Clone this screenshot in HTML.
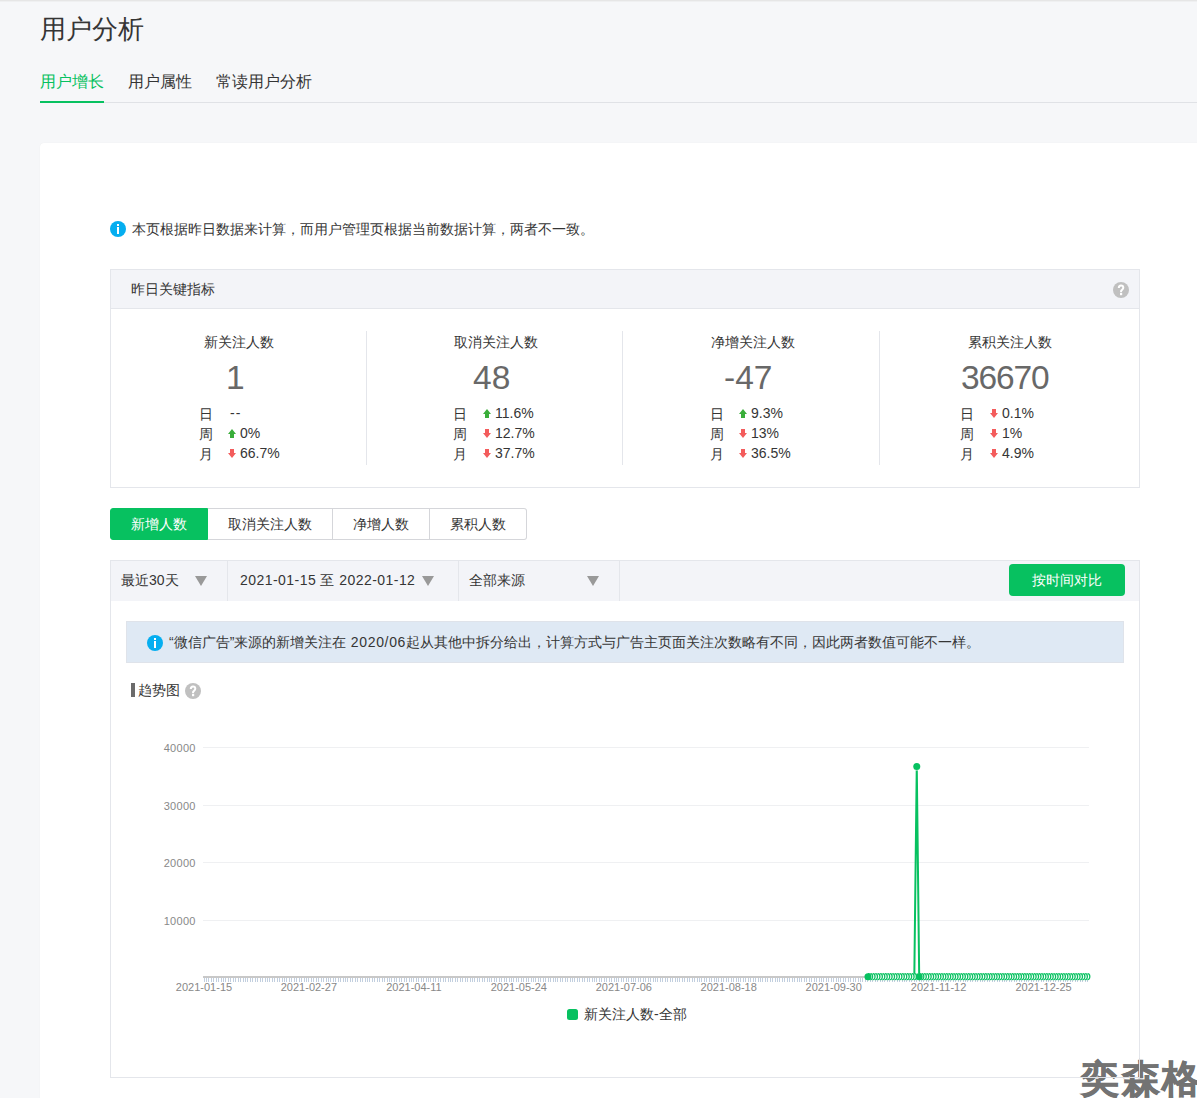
<!DOCTYPE html>
<html><head><meta charset="utf-8">
<style>
*{box-sizing:border-box;margin:0;padding:0}
html,body{width:1197px;height:1098px;overflow:hidden}
body{background:#f6f7f9;font-family:"Liberation Sans",sans-serif;color:#353535;position:relative;font-size:14px}
.a{position:absolute;white-space:nowrap}
.topline{left:0;top:0;width:1197px;height:2px;background:linear-gradient(#e6e6e6 0,#e6e6e6 1px,#eff0f1 1px,#eff0f1 2px)}
.title{left:40px;top:12px;font-size:26px;line-height:34px;color:#353535}
.tab{top:72px;font-size:16px;line-height:20px;color:#353535}
.tabline{left:40px;top:102px;width:1157px;height:1px;background:#e0e2e6}
.tabul{left:40px;top:101px;width:64px;height:2px;background:#07c160}
.card{left:40px;top:143px;width:1170px;height:1000px;background:#fff;border-radius:4px;box-shadow:0 0 1px rgba(0,0,0,.08)}
.icon-i{width:16px;height:16px;border-radius:50%;background:#05aef0}
.icon-i:before{content:"";position:absolute;left:7px;top:3px;width:2px;height:2px;background:#fff}
.icon-i:after{content:"";position:absolute;left:7px;top:6px;width:2px;height:7px;background:#fff}
.icon-q{width:16px;height:16px;border-radius:50%;background:#c0c0c0;color:#fff;font-size:13px;line-height:16px;text-align:center;font-weight:bold}
.kbox{left:110px;top:269px;width:1030px;height:219px;border:1px solid #e4e6eb}
.khead{left:111px;top:270px;width:1028px;height:39px;background:#f3f4f8;border-bottom:1px solid #e4e6eb}
.vdiv{top:331px;width:1px;height:134px;background:#e4e6eb}
.ktitle{top:332px;font-size:14px;line-height:20px;color:#353535}
.knum{top:360px;font-size:33.5px;line-height:36px;color:#686868}
.krow{font-size:14px;line-height:20px;color:#353535}
.arr{width:8px;height:9px}
.seg{top:508px;height:32px;border:1px solid #d5d6da;background:#fff;font-size:14px;line-height:30px;text-align:center;color:#353535}
.fbar{left:110px;top:560px;width:1030px;height:518px;border:1px solid #e4e6eb;background:#fff}
.fhead{left:111px;top:561px;width:1028px;height:40px;background:#f3f4f8}
.fdiv{top:561px;width:1px;height:40px;background:#e4e6eb}
.ftext{top:570px;font-size:14px;line-height:20px;color:#353535}
.tri{width:0;height:0;border-left:6px solid transparent;border-right:6px solid transparent;border-top:10px solid #999}
.btn{left:1009px;top:564px;width:116px;height:32px;border-radius:4px;background:#07c160;color:#fff;font-size:14px;line-height:32px;text-align:center}
.notice{left:126px;top:621px;width:998px;height:42px;background:#dfe9f4;border:1px solid #dfe3ea}
</style></head><body>
<div class="a topline"></div>
<div class="a title">用户分析</div>
<div class="a tab" style="left:40px;color:#07c160">用户增长</div>
<div class="a tab" style="left:128px">用户属性</div>
<div class="a tab" style="left:216px">常读用户分析</div>
<div class="a tabline"></div>
<div class="a tabul"></div>
<div class="a card"></div>

<div class="a icon-i" style="left:110px;top:221px"></div>
<div class="a" style="left:132px;top:219px;font-size:14px;line-height:20px">本页根据昨日数据来计算，而用户管理页根据当前数据计算，两者不一致。</div>

<div class="a kbox"></div>
<div class="a khead"></div>
<div class="a" style="left:131px;top:279px;font-size:14px;line-height:20px">昨日关键指标</div>
<svg class="a" style="left:1113px;top:282px" width="16" height="16" viewBox="0 0 16 16"><circle cx="8" cy="8" r="8" fill="#c0c0c0"/><path d="M5.8 6.1C5.8 4.5 6.8 3.4 8 3.4C9.3 3.4 10.3 4.4 10.3 5.8C10.3 7.2 8.8 7.7 8.1 8.9V10.2" fill="none" stroke="#fff" stroke-width="2"/><rect x="7" y="11" width="2.2" height="2.2" fill="#fff"/></svg>
<div class="a vdiv" style="left:366px"></div>
<div class="a vdiv" style="left:622px"></div>
<div class="a vdiv" style="left:879px"></div>


<div class="a ktitle" style="left:204px">新关注人数</div>
<div class="a ktitle" style="left:454px">取消关注人数</div>
<div class="a ktitle" style="left:711px">净增关注人数</div>
<div class="a ktitle" style="left:968px">累积关注人数</div>
<div class="a knum" style="left:226px">1</div>
<div class="a knum" style="left:473px">48</div>
<div class="a knum" style="left:724px">-47</div>
<div class="a knum" style="left:961px;letter-spacing:-1.1px">36670</div>

<div class="a krow" style="left:199px;top:404px">日</div>
<div class="a krow" style="left:199px;top:424px">周</div>
<div class="a krow" style="left:199px;top:444px">月</div>
<div class="a krow" style="left:230px;top:403px;letter-spacing:1px">--</div>
<svg class="a arr" style="left:228px;top:429px" viewBox="0 0 8 9"><path d="M4 0L8 5H6V9H2V5H0Z" fill="#3aae3a"/></svg>
<div class="a krow" style="left:240px;top:423px">0%</div>
<svg class="a arr" style="left:228px;top:449px" viewBox="0 0 8 9"><path d="M4 9L8 4H6V0H2V4H0Z" fill="#f35c5c"/></svg>
<div class="a krow" style="left:240px;top:443px">66.7%</div>

<div class="a krow" style="left:453px;top:404px">日</div>
<div class="a krow" style="left:453px;top:424px">周</div>
<div class="a krow" style="left:453px;top:444px">月</div>
<svg class="a arr" style="left:483px;top:409px" viewBox="0 0 8 9"><path d="M4 0L8 5H6V9H2V5H0Z" fill="#3aae3a"/></svg>
<div class="a krow" style="left:495px;top:403px">11.6%</div>
<svg class="a arr" style="left:483px;top:429px" viewBox="0 0 8 9"><path d="M4 9L8 4H6V0H2V4H0Z" fill="#f35c5c"/></svg>
<div class="a krow" style="left:495px;top:423px">12.7%</div>
<svg class="a arr" style="left:483px;top:449px" viewBox="0 0 8 9"><path d="M4 9L8 4H6V0H2V4H0Z" fill="#f35c5c"/></svg>
<div class="a krow" style="left:495px;top:443px">37.7%</div>

<div class="a krow" style="left:709.5px;top:404px">日</div>
<div class="a krow" style="left:709.5px;top:424px">周</div>
<div class="a krow" style="left:709.5px;top:444px">月</div>
<svg class="a arr" style="left:739px;top:409px" viewBox="0 0 8 9"><path d="M4 0L8 5H6V9H2V5H0Z" fill="#3aae3a"/></svg>
<div class="a krow" style="left:751px;top:403px">9.3%</div>
<svg class="a arr" style="left:739px;top:429px" viewBox="0 0 8 9"><path d="M4 9L8 4H6V0H2V4H0Z" fill="#f35c5c"/></svg>
<div class="a krow" style="left:751px;top:423px">13%</div>
<svg class="a arr" style="left:739px;top:449px" viewBox="0 0 8 9"><path d="M4 9L8 4H6V0H2V4H0Z" fill="#f35c5c"/></svg>
<div class="a krow" style="left:751px;top:443px">36.5%</div>

<div class="a krow" style="left:960px;top:404px">日</div>
<div class="a krow" style="left:960px;top:424px">周</div>
<div class="a krow" style="left:960px;top:444px">月</div>
<svg class="a arr" style="left:990px;top:409px" viewBox="0 0 8 9"><path d="M4 9L8 4H6V0H2V4H0Z" fill="#f35c5c"/></svg>
<div class="a krow" style="left:1002px;top:403px">0.1%</div>
<svg class="a arr" style="left:990px;top:429px" viewBox="0 0 8 9"><path d="M4 9L8 4H6V0H2V4H0Z" fill="#f35c5c"/></svg>
<div class="a krow" style="left:1002px;top:423px">1%</div>
<svg class="a arr" style="left:990px;top:449px" viewBox="0 0 8 9"><path d="M4 9L8 4H6V0H2V4H0Z" fill="#f35c5c"/></svg>
<div class="a krow" style="left:1002px;top:443px">4.9%</div>

<div class="a seg" style="left:110px;width:98px;background:#07c160;border-color:#07c160;color:#fff;border-radius:3px 0 0 3px">新增人数</div>
<div class="a seg" style="left:208px;width:125px;border-left:0">取消关注人数</div>
<div class="a seg" style="left:333px;width:97px;border-left:0">净增人数</div>
<div class="a seg" style="left:430px;width:97px;border-left:0;border-radius:0 3px 3px 0">累积人数</div>

<div class="a fbar"></div>
<div class="a fhead"></div>
<div class="a fdiv" style="left:227px"></div>
<div class="a fdiv" style="left:458px"></div>
<div class="a fdiv" style="left:619px"></div>
<div class="a ftext" style="left:121px">最近30天</div>
<div class="a tri" style="left:195px;top:576px"></div>
<div class="a ftext" style="left:240px;letter-spacing:0.45px">2021-01-15 至 2022-01-12</div>
<div class="a tri" style="left:422px;top:576px"></div>
<div class="a ftext" style="left:469px">全部来源</div>
<div class="a tri" style="left:587px;top:576px"></div>
<div class="a btn">按时间对比</div>

<div class="a notice"></div>
<div class="a icon-i" style="left:147px;top:635px"></div>
<div class="a" style="left:169px;top:632px;font-size:14px;line-height:20px">“微信广告”来源的新增关注在<span style="letter-spacing:0.65px"> 2020/06</span>起从其他中拆分给出，计算方式与广告主页面关注次数略有不同，因此两者数值可能不一样。</div>

<div class="a" style="left:131px;top:683px;width:4px;height:14px;background:#6b6b6b"></div>
<div class="a" style="left:138px;top:680px;font-size:14px;line-height:20px">趋势图</div>
<svg class="a" style="left:185px;top:683px" width="16" height="16" viewBox="0 0 16 16"><circle cx="8" cy="8" r="8" fill="#c0c0c0"/><path d="M5.8 6.1C5.8 4.5 6.8 3.4 8 3.4C9.3 3.4 10.3 4.4 10.3 5.8C10.3 7.2 8.8 7.7 8.1 8.9V10.2" fill="none" stroke="#fff" stroke-width="2"/><rect x="7" y="11" width="2.2" height="2.2" fill="#fff"/></svg>
<div class="a" style="left:1081px;top:1055px;font-size:38px;line-height:48px;font-weight:900;letter-spacing:2.5px;color:#737373;-webkit-text-stroke:0.8px #737373">奕森格</div>
<div class="a" style="left:1080px;top:1077px;width:60px;height:1px;background:#dcdee3"></div><div class="a" style="left:1139px;top:1058px;width:1px;height:19px;background:#dcdee3"></div>
<!--CHART--><svg class="a" style="left:0;top:0" width="1197" height="1098" viewBox="0 0 1197 1098">
<line x1="203" y1="747.5" x2="1089" y2="747.5" stroke="#eff0f2" stroke-width="1"/>
<text x="195.8" y="751.5" text-anchor="end" font-size="11" letter-spacing="0.3" fill="#888" font-family="Liberation Sans">40000</text>
<line x1="203" y1="805.5" x2="1089" y2="805.5" stroke="#eff0f2" stroke-width="1"/>
<text x="195.8" y="809.5" text-anchor="end" font-size="11" letter-spacing="0.3" fill="#888" font-family="Liberation Sans">30000</text>
<line x1="203" y1="862.5" x2="1089" y2="862.5" stroke="#eff0f2" stroke-width="1"/>
<text x="195.8" y="866.5" text-anchor="end" font-size="11" letter-spacing="0.3" fill="#888" font-family="Liberation Sans">20000</text>
<line x1="203" y1="920.5" x2="1089" y2="920.5" stroke="#eff0f2" stroke-width="1"/>
<text x="195.8" y="924.5" text-anchor="end" font-size="11" letter-spacing="0.3" fill="#888" font-family="Liberation Sans">10000</text>
<path d="M204.5 978V982M206.5 978V982M208.5 978V982M211.5 978V982M213.5 978V982M216.5 978V982M218.5 978V982M221.5 978V982M223.5 978V982M225.5 978V982M228.5 978V982M230.5 978V982M233.5 978V982M235.5 978V982M238.5 978V982M240.5 978V982M243.5 978V982M245.5 978V982M247.5 978V982M250.5 978V982M252.5 978V982M255.5 978V982M257.5 978V982M260.5 978V982M262.5 978V982M265.5 978V982M267.5 978V982M269.5 978V982M272.5 978V982M274.5 978V982M277.5 978V982M279.5 978V982M282.5 978V982M284.5 978V982M286.5 978V982M289.5 978V982M291.5 978V982M294.5 978V982M296.5 978V982M299.5 978V982M301.5 978V982M304.5 978V982M306.5 978V982M308.5 978V982M311.5 978V982M313.5 978V982M316.5 978V982M318.5 978V982M321.5 978V982M323.5 978V982M326.5 978V982M328.5 978V982M330.5 978V982M333.5 978V982M335.5 978V982M338.5 978V982M340.5 978V982M343.5 978V982M345.5 978V982M347.5 978V982M350.5 978V982M352.5 978V982M355.5 978V982M357.5 978V982M360.5 978V982M362.5 978V982M365.5 978V982M367.5 978V982M369.5 978V982M372.5 978V982M374.5 978V982M377.5 978V982M379.5 978V982M382.5 978V982M384.5 978V982M387.5 978V982M389.5 978V982M391.5 978V982M394.5 978V982M396.5 978V982M399.5 978V982M401.5 978V982M404.5 978V982M406.5 978V982M409.5 978V982M411.5 978V982M413.5 978V982M416.5 978V982M418.5 978V982M421.5 978V982M423.5 978V982M426.5 978V982M428.5 978V982M430.5 978V982M433.5 978V982M435.5 978V982M438.5 978V982M440.5 978V982M443.5 978V982M445.5 978V982M448.5 978V982M450.5 978V982M452.5 978V982M455.5 978V982M457.5 978V982M460.5 978V982M462.5 978V982M465.5 978V982M467.5 978V982M470.5 978V982M472.5 978V982M474.5 978V982M477.5 978V982M479.5 978V982M482.5 978V982M484.5 978V982M487.5 978V982M489.5 978V982M491.5 978V982M494.5 978V982M496.5 978V982M499.5 978V982M501.5 978V982M504.5 978V982M506.5 978V982M509.5 978V982M511.5 978V982M513.5 978V982M516.5 978V982M518.5 978V982M521.5 978V982M523.5 978V982M526.5 978V982M528.5 978V982M531.5 978V982M533.5 978V982M535.5 978V982M538.5 978V982M540.5 978V982M543.5 978V982M545.5 978V982M548.5 978V982M550.5 978V982M553.5 978V982M555.5 978V982M557.5 978V982M560.5 978V982M562.5 978V982M565.5 978V982M567.5 978V982M570.5 978V982M572.5 978V982M574.5 978V982M577.5 978V982M579.5 978V982M582.5 978V982M584.5 978V982M587.5 978V982M589.5 978V982M592.5 978V982M594.5 978V982M596.5 978V982M599.5 978V982M601.5 978V982M604.5 978V982M606.5 978V982M609.5 978V982M611.5 978V982M614.5 978V982M616.5 978V982M618.5 978V982M621.5 978V982M623.5 978V982M626.5 978V982M628.5 978V982M631.5 978V982M633.5 978V982M635.5 978V982M638.5 978V982M640.5 978V982M643.5 978V982M645.5 978V982M648.5 978V982M650.5 978V982M653.5 978V982M655.5 978V982M657.5 978V982M660.5 978V982M662.5 978V982M665.5 978V982M667.5 978V982M670.5 978V982M672.5 978V982M675.5 978V982M677.5 978V982M679.5 978V982M682.5 978V982M684.5 978V982M687.5 978V982M689.5 978V982M692.5 978V982M694.5 978V982M697.5 978V982M699.5 978V982M701.5 978V982M704.5 978V982M706.5 978V982M709.5 978V982M711.5 978V982M714.5 978V982M716.5 978V982M718.5 978V982M721.5 978V982M723.5 978V982M726.5 978V982M728.5 978V982M731.5 978V982M733.5 978V982M736.5 978V982M738.5 978V982M740.5 978V982M743.5 978V982M745.5 978V982M748.5 978V982M750.5 978V982M753.5 978V982M755.5 978V982M758.5 978V982M760.5 978V982M762.5 978V982M765.5 978V982M767.5 978V982M770.5 978V982M772.5 978V982M775.5 978V982M777.5 978V982M779.5 978V982M782.5 978V982M784.5 978V982M787.5 978V982M789.5 978V982M792.5 978V982M794.5 978V982M797.5 978V982M799.5 978V982M801.5 978V982M804.5 978V982M806.5 978V982M809.5 978V982M811.5 978V982M814.5 978V982M816.5 978V982M819.5 978V982M821.5 978V982M823.5 978V982M826.5 978V982M828.5 978V982M831.5 978V982M833.5 978V982M836.5 978V982M838.5 978V982M840.5 978V982M843.5 978V982M845.5 978V982M848.5 978V982M850.5 978V982M853.5 978V982M855.5 978V982M858.5 978V982M860.5 978V982M862.5 978V982M865.5 978V982M867.5 978V982M870.5 978V982M872.5 978V982M875.5 978V982M877.5 978V982M880.5 978V982M882.5 978V982M884.5 978V982M887.5 978V982M889.5 978V982M892.5 978V982M894.5 978V982M897.5 978V982M899.5 978V982M902.5 978V982M904.5 978V982M906.5 978V982M909.5 978V982M911.5 978V982M914.5 978V982M916.5 978V982M919.5 978V982M921.5 978V982M923.5 978V982M926.5 978V982M928.5 978V982M931.5 978V982M933.5 978V982M936.5 978V982M938.5 978V982M941.5 978V982M943.5 978V982M945.5 978V982M948.5 978V982M950.5 978V982M953.5 978V982M955.5 978V982M958.5 978V982M960.5 978V982M963.5 978V982M965.5 978V982M967.5 978V982M970.5 978V982M972.5 978V982M975.5 978V982M977.5 978V982M980.5 978V982M982.5 978V982M984.5 978V982M987.5 978V982M989.5 978V982M992.5 978V982M994.5 978V982M997.5 978V982M999.5 978V982M1002.5 978V982M1004.5 978V982M1006.5 978V982M1009.5 978V982M1011.5 978V982M1014.5 978V982M1016.5 978V982M1019.5 978V982M1021.5 978V982M1024.5 978V982M1026.5 978V982M1028.5 978V982M1031.5 978V982M1033.5 978V982M1036.5 978V982M1038.5 978V982M1041.5 978V982M1043.5 978V982M1046.5 978V982M1048.5 978V982M1050.5 978V982M1053.5 978V982M1055.5 978V982M1058.5 978V982M1060.5 978V982M1063.5 978V982M1065.5 978V982M1067.5 978V982M1070.5 978V982M1072.5 978V982M1075.5 978V982M1077.5 978V982M1080.5 978V982M1082.5 978V982M1085.5 978V982M1087.5 978V982" stroke="#c2cfdf" stroke-width="1"/>
<rect x="203" y="976" width="885" height="2" fill="#c8c8c8"/>
<text x="204.0" y="991" text-anchor="middle" font-size="11" fill="#888" font-family="Liberation Sans">2021-01-15</text>
<text x="308.9" y="991" text-anchor="middle" font-size="11" fill="#888" font-family="Liberation Sans">2021-02-27</text>
<text x="413.9" y="991" text-anchor="middle" font-size="11" fill="#888" font-family="Liberation Sans">2021-04-11</text>
<text x="518.8" y="991" text-anchor="middle" font-size="11" fill="#888" font-family="Liberation Sans">2021-05-24</text>
<text x="623.8" y="991" text-anchor="middle" font-size="11" fill="#888" font-family="Liberation Sans">2021-07-06</text>
<text x="728.7" y="991" text-anchor="middle" font-size="11" fill="#888" font-family="Liberation Sans">2021-08-18</text>
<text x="833.7" y="991" text-anchor="middle" font-size="11" fill="#888" font-family="Liberation Sans">2021-09-30</text>
<text x="938.6" y="991" text-anchor="middle" font-size="11" fill="#888" font-family="Liberation Sans">2021-11-12</text>
<text x="1043.6" y="991" text-anchor="middle" font-size="11" fill="#888" font-family="Liberation Sans">2021-12-25</text>
<polyline points="867.95,976.70 870.39,976.70 872.83,976.70 875.27,976.70 877.71,976.70 880.15,976.70 882.59,976.70 885.03,976.70 887.47,976.70 889.91,976.70 892.35,976.70 894.79,976.70 897.23,976.70 899.67,976.70 902.11,976.70 904.55,976.70 907.00,976.70 909.44,976.70 911.88,976.70 914.32,976.70 916.76,766.58 919.20,976.70 921.64,976.70 924.08,976.70 926.52,976.70 928.96,976.70 931.40,976.70 933.84,976.70 936.28,976.70 938.72,976.70 941.16,976.70 943.60,976.70 946.04,976.70 948.49,976.70 950.93,976.70 953.37,976.70 955.81,976.70 958.25,976.70 960.69,976.70 963.13,976.70 965.57,976.70 968.01,976.70 970.45,976.70 972.89,976.70 975.33,976.70 977.77,976.70 980.21,976.70 982.65,976.70 985.09,976.70 987.54,976.70 989.98,976.70 992.42,976.70 994.86,976.70 997.30,976.70 999.74,976.70 1002.18,976.70 1004.62,976.70 1007.06,976.70 1009.50,976.70 1011.94,976.70 1014.38,976.70 1016.82,976.70 1019.26,976.70 1021.70,976.70 1024.14,976.70 1026.58,976.70 1029.03,976.70 1031.47,976.70 1033.91,976.70 1036.35,976.70 1038.79,976.70 1041.23,976.70 1043.67,976.70 1046.11,976.70 1048.55,976.70 1050.99,976.70 1053.43,976.70 1055.87,976.70 1058.31,976.70 1060.75,976.70 1063.19,976.70 1065.63,976.70 1068.08,976.70 1070.52,976.70 1072.96,976.70 1075.40,976.70 1077.84,976.70 1080.28,976.70 1082.72,976.70 1085.16,976.70 1087.60,976.70" fill="none" stroke="#07c160" stroke-width="2" stroke-linejoin="round"/>
<rect x="867.95" y="973.70" width="222.65" height="6" fill="#fff"/>
<path d="M867.95 973.70H1087.60M867.95 979.70H1087.60" stroke="#07c160" stroke-opacity="0.3" stroke-width="1"/>
<path d="M867.95 973.70A2.2 3 0 0 1 867.95 979.70M870.39 973.70A2.2 3 0 0 1 870.39 979.70M872.83 973.70A2.2 3 0 0 1 872.83 979.70M875.27 973.70A2.2 3 0 0 1 875.27 979.70M877.71 973.70A2.2 3 0 0 1 877.71 979.70M880.15 973.70A2.2 3 0 0 1 880.15 979.70M882.59 973.70A2.2 3 0 0 1 882.59 979.70M885.03 973.70A2.2 3 0 0 1 885.03 979.70M887.47 973.70A2.2 3 0 0 1 887.47 979.70M889.91 973.70A2.2 3 0 0 1 889.91 979.70M892.35 973.70A2.2 3 0 0 1 892.35 979.70M894.79 973.70A2.2 3 0 0 1 894.79 979.70M897.23 973.70A2.2 3 0 0 1 897.23 979.70M899.67 973.70A2.2 3 0 0 1 899.67 979.70M902.11 973.70A2.2 3 0 0 1 902.11 979.70M904.55 973.70A2.2 3 0 0 1 904.55 979.70M907.00 973.70A2.2 3 0 0 1 907.00 979.70M909.44 973.70A2.2 3 0 0 1 909.44 979.70M911.88 973.70A2.2 3 0 0 1 911.88 979.70M914.32 973.70A2.2 3 0 0 1 914.32 979.70M919.20 973.70A2.2 3 0 0 1 919.20 979.70M921.64 973.70A2.2 3 0 0 1 921.64 979.70M924.08 973.70A2.2 3 0 0 1 924.08 979.70M926.52 973.70A2.2 3 0 0 1 926.52 979.70M928.96 973.70A2.2 3 0 0 1 928.96 979.70M931.40 973.70A2.2 3 0 0 1 931.40 979.70M933.84 973.70A2.2 3 0 0 1 933.84 979.70M936.28 973.70A2.2 3 0 0 1 936.28 979.70M938.72 973.70A2.2 3 0 0 1 938.72 979.70M941.16 973.70A2.2 3 0 0 1 941.16 979.70M943.60 973.70A2.2 3 0 0 1 943.60 979.70M946.04 973.70A2.2 3 0 0 1 946.04 979.70M948.49 973.70A2.2 3 0 0 1 948.49 979.70M950.93 973.70A2.2 3 0 0 1 950.93 979.70M953.37 973.70A2.2 3 0 0 1 953.37 979.70M955.81 973.70A2.2 3 0 0 1 955.81 979.70M958.25 973.70A2.2 3 0 0 1 958.25 979.70M960.69 973.70A2.2 3 0 0 1 960.69 979.70M963.13 973.70A2.2 3 0 0 1 963.13 979.70M965.57 973.70A2.2 3 0 0 1 965.57 979.70M968.01 973.70A2.2 3 0 0 1 968.01 979.70M970.45 973.70A2.2 3 0 0 1 970.45 979.70M972.89 973.70A2.2 3 0 0 1 972.89 979.70M975.33 973.70A2.2 3 0 0 1 975.33 979.70M977.77 973.70A2.2 3 0 0 1 977.77 979.70M980.21 973.70A2.2 3 0 0 1 980.21 979.70M982.65 973.70A2.2 3 0 0 1 982.65 979.70M985.09 973.70A2.2 3 0 0 1 985.09 979.70M987.54 973.70A2.2 3 0 0 1 987.54 979.70M989.98 973.70A2.2 3 0 0 1 989.98 979.70M992.42 973.70A2.2 3 0 0 1 992.42 979.70M994.86 973.70A2.2 3 0 0 1 994.86 979.70M997.30 973.70A2.2 3 0 0 1 997.30 979.70M999.74 973.70A2.2 3 0 0 1 999.74 979.70M1002.18 973.70A2.2 3 0 0 1 1002.18 979.70M1004.62 973.70A2.2 3 0 0 1 1004.62 979.70M1007.06 973.70A2.2 3 0 0 1 1007.06 979.70M1009.50 973.70A2.2 3 0 0 1 1009.50 979.70M1011.94 973.70A2.2 3 0 0 1 1011.94 979.70M1014.38 973.70A2.2 3 0 0 1 1014.38 979.70M1016.82 973.70A2.2 3 0 0 1 1016.82 979.70M1019.26 973.70A2.2 3 0 0 1 1019.26 979.70M1021.70 973.70A2.2 3 0 0 1 1021.70 979.70M1024.14 973.70A2.2 3 0 0 1 1024.14 979.70M1026.58 973.70A2.2 3 0 0 1 1026.58 979.70M1029.03 973.70A2.2 3 0 0 1 1029.03 979.70M1031.47 973.70A2.2 3 0 0 1 1031.47 979.70M1033.91 973.70A2.2 3 0 0 1 1033.91 979.70M1036.35 973.70A2.2 3 0 0 1 1036.35 979.70M1038.79 973.70A2.2 3 0 0 1 1038.79 979.70M1041.23 973.70A2.2 3 0 0 1 1041.23 979.70M1043.67 973.70A2.2 3 0 0 1 1043.67 979.70M1046.11 973.70A2.2 3 0 0 1 1046.11 979.70M1048.55 973.70A2.2 3 0 0 1 1048.55 979.70M1050.99 973.70A2.2 3 0 0 1 1050.99 979.70M1053.43 973.70A2.2 3 0 0 1 1053.43 979.70M1055.87 973.70A2.2 3 0 0 1 1055.87 979.70M1058.31 973.70A2.2 3 0 0 1 1058.31 979.70M1060.75 973.70A2.2 3 0 0 1 1060.75 979.70M1063.19 973.70A2.2 3 0 0 1 1063.19 979.70M1065.63 973.70A2.2 3 0 0 1 1065.63 979.70M1068.08 973.70A2.2 3 0 0 1 1068.08 979.70M1070.52 973.70A2.2 3 0 0 1 1070.52 979.70M1072.96 973.70A2.2 3 0 0 1 1072.96 979.70M1075.40 973.70A2.2 3 0 0 1 1075.40 979.70M1077.84 973.70A2.2 3 0 0 1 1077.84 979.70M1080.28 973.70A2.2 3 0 0 1 1080.28 979.70M1082.72 973.70A2.2 3 0 0 1 1082.72 979.70M1085.16 973.70A2.2 3 0 0 1 1085.16 979.70M1087.60 973.70A2.2 3 0 0 1 1087.60 979.70" fill="none" stroke="#07c160" stroke-width="1.3"/>
<circle cx="919.20" cy="976.7" r="3.5" fill="#07c160"/>
<circle cx="867.95" cy="976.7" r="3.5" fill="#07c160"/>
<circle cx="916.76" cy="766.58" r="4" fill="#fff"/>
<circle cx="916.76" cy="766.58" r="3.5" fill="#07c160"/>
<rect x="567" y="1009" width="11" height="11" rx="2.5" fill="#07c160"/>
</svg>
<div class="a" style="left:584px;top:1004px;font-size:14px;line-height:20px;color:#353535">新关注人数-全部</div><!--/CHART-->
</body></html>
